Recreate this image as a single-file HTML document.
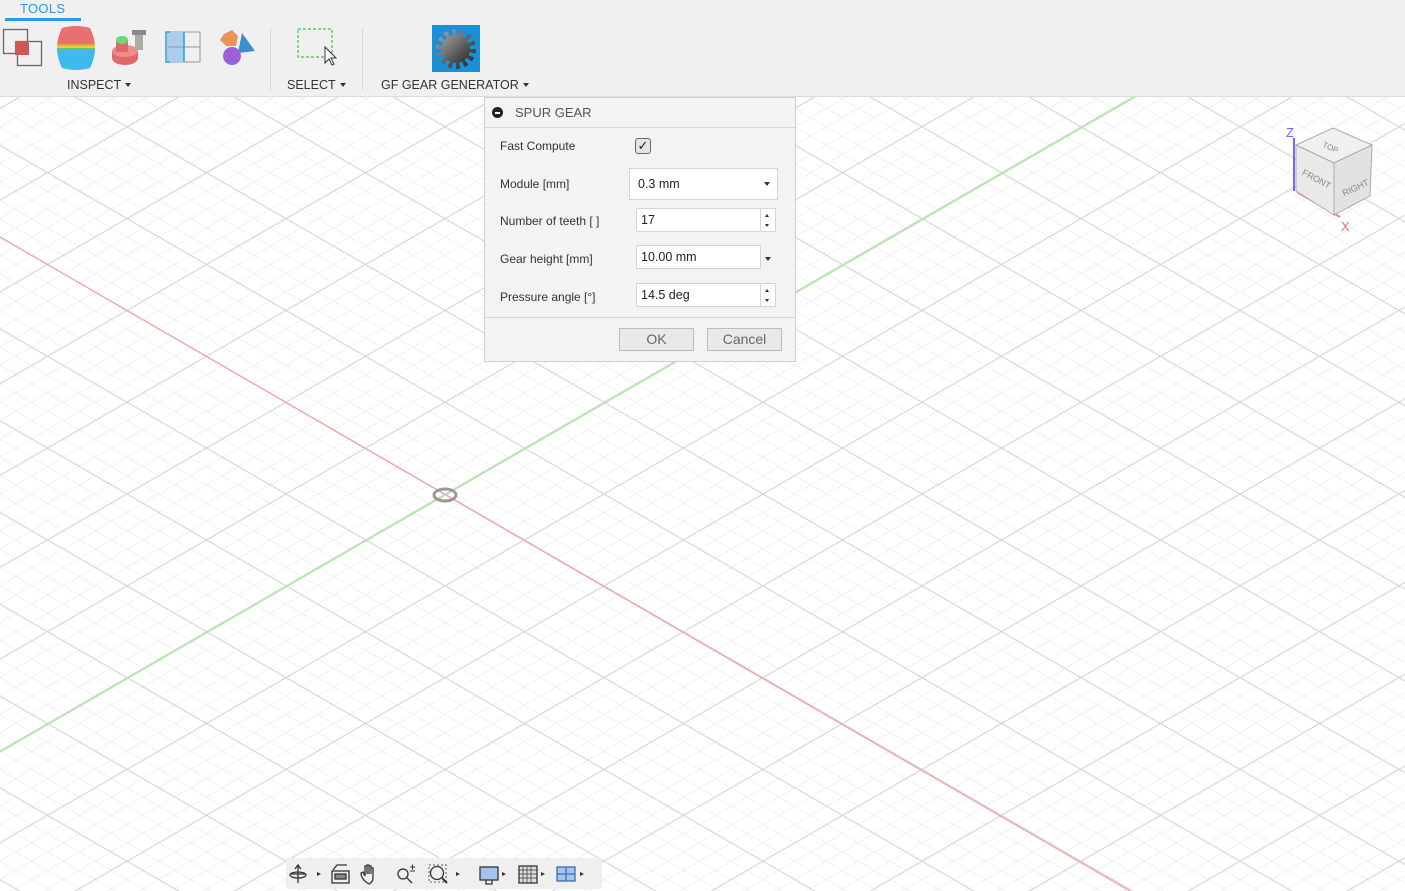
<!DOCTYPE html>
<html><head><meta charset="utf-8">
<style>
*{margin:0;padding:0;box-sizing:border-box}
body{width:1405px;height:891px;overflow:hidden;background:#fff;font-family:"Liberation Sans",Arial,sans-serif;position:relative}
#tb{position:absolute;left:0;top:0;width:1405px;height:97px;background:#f0f0f0;border-bottom:1px solid #dcdcdc}
.lbl{position:absolute;font-size:12.5px;color:#333;top:78px;white-space:nowrap}
.lbl:after{content:"";display:inline-block;margin-left:4px;vertical-align:2px;border-left:3px solid transparent;border-right:3px solid transparent;border-top:4px solid #333}
.sep{position:absolute;top:28px;width:1px;height:62px;background:#d8d8d8}
#dlg{position:absolute;left:484px;top:97px;width:312px;height:265px;background:#f3f3f3;border:1px solid #cfcfcf;font-size:12px;color:#333}
#dlg .hd{height:30px;border-bottom:1px solid #d6d6d6;position:relative}
#dlg .hd span{position:absolute;left:30px;top:7px;color:#555;font-size:13px}
#dlg .hd i{position:absolute;left:7px;top:9px;width:11px;height:11px;border-radius:50%;background:#222}
#dlg .hd i:after{content:"";position:absolute;left:3px;top:5px;width:5px;height:1.5px;background:#fff}
.row{position:absolute;left:15px}
.inp{position:absolute;background:#fff;border:1px solid #d4d4d4;font-size:12.5px;padding-left:4px;line-height:22px;height:24px;color:#222}
.spin{position:absolute;width:15px;height:24px;border:1px solid #d4d4d4;border-left:none;background:#fff}
.spin:before{content:"";position:absolute;left:4px;top:5px;border-left:2.5px solid transparent;border-right:2.5px solid transparent;border-bottom:3px solid #333}
.spin:after{content:"";position:absolute;left:4px;top:15px;border-left:2.5px solid transparent;border-right:2.5px solid transparent;border-top:3px solid #333}
.tri{position:absolute;border-left:3.5px solid transparent;border-right:3.5px solid transparent;border-top:4px solid #333}
.btn{position:absolute;top:230px;height:23px;border:1px solid #bdbdbd;background:#e9e9e9;font-size:14px;color:#666;text-align:center;line-height:21px}
#bt{position:absolute;left:286px;top:858px;width:316px;height:31px;background:#efefef}
</style></head><body>
<svg width="1405" height="891" style="position:absolute;left:0;top:0">
<defs>
<pattern id="g" patternUnits="userSpaceOnUse" x="-32" y="35" width="159" height="91.8">
<g stroke="#f0f0f0" stroke-width="1">
<line x1="-127.2" y1="0" x2="31.8" y2="91.8"/><line x1="-95.4" y1="0" x2="63.6" y2="91.8"/><line x1="-63.6" y1="0" x2="95.4" y2="91.8"/><line x1="-31.8" y1="0" x2="127.2" y2="91.8"/>
<line x1="31.8" y1="0" x2="190.8" y2="91.8"/><line x1="63.6" y1="0" x2="222.6" y2="91.8"/><line x1="95.4" y1="0" x2="254.4" y2="91.8"/><line x1="127.2" y1="0" x2="286.2" y2="91.8"/>
<line x1="31.8" y1="0" x2="-127.2" y2="91.8"/><line x1="63.6" y1="0" x2="-95.4" y2="91.8"/><line x1="95.4" y1="0" x2="-63.6" y2="91.8"/><line x1="127.2" y1="0" x2="-31.8" y2="91.8"/>
<line x1="190.8" y1="0" x2="31.8" y2="91.8"/><line x1="222.6" y1="0" x2="63.6" y2="91.8"/><line x1="254.4" y1="0" x2="95.4" y2="91.8"/><line x1="286.2" y1="0" x2="127.2" y2="91.8"/>
</g>
<g stroke="#d3d3d3" stroke-width="1.1">
<line x1="0" y1="0" x2="159" y2="91.8"/><line x1="-159" y1="0" x2="0" y2="91.8"/><line x1="159" y1="0" x2="318" y2="91.8"/>
<line x1="159" y1="0" x2="0" y2="91.8"/><line x1="0" y1="0" x2="-159" y2="91.8"/><line x1="318" y1="0" x2="159" y2="91.8"/>
</g>
</pattern>
<linearGradient id="gg" x1="0" y1="0" x2="1" y2="1"><stop offset="0" stop-color="#a0a0a0"/><stop offset="1" stop-color="#2a2a2a"/></linearGradient>
</defs>
<rect x="0" y="97" width="1405" height="794" fill="url(#g)"/>
<line x1="0" y1="237" x2="1130" y2="891" stroke="#f4a4a4" stroke-width="1.3"/>
<line x1="0" y1="752" x2="1135" y2="97" stroke="#a6ec9c" stroke-width="1.3"/>
<ellipse cx="445" cy="495" rx="11" ry="6" fill="none" stroke="#999" stroke-width="3"/>
<g>
<line x1="1294" y1="138" x2="1294" y2="191" stroke="#6a6aff" stroke-width="2"/>
<text x="1286" y="137" font-size="13" fill="#6a6aff" font-family="Liberation Sans">Z</text>
<line x1="1297" y1="192" x2="1340" y2="217" stroke="#f08080" stroke-width="2"/>
<text x="1341" y="231" font-size="13" fill="#f07070" font-family="Liberation Sans">X</text>
<polygon points="1296,145 1333,128 1372,145 1334,163" fill="#f0f0f0" stroke="#aaa"/>
<polygon points="1296,145 1334,163 1334,215 1296,191" fill="#e9e9e9" stroke="#aaa"/>
<polygon points="1334,163 1372,145 1370,196 1334,215" fill="#e2e2e2" stroke="#aaa"/>
<text x="1322" y="150" font-size="8" fill="#888" transform="rotate(25 1330 148)">TOP</text>
<text x="1300" y="180" font-size="9" fill="#888" transform="rotate(28 1312 180)">FRONT</text>
<text x="1340" y="192" font-size="9" fill="#888" transform="rotate(-25 1352 185)">RIGHT</text>
</g>
</svg>

<div id="tb">
<div style="position:absolute;left:20px;top:1px;font-size:13px;color:#2a9ce0;letter-spacing:.3px">TOOLS</div>
<div style="position:absolute;left:5px;top:18px;width:76px;height:3px;background:#2a9ce0"></div>
<svg width="540" height="76" style="position:absolute;left:0;top:20px">
<rect x="3.5" y="9.5" width="24" height="24" fill="none" stroke="#666" stroke-width="1.3"/>
<rect x="17.5" y="21.5" width="24" height="24" fill="none" stroke="#666" stroke-width="1.3"/>
<rect x="15" y="21" width="14" height="14" fill="#d05555"/>
<clipPath id="bc"><path d="M62,8 Q76,4 90,8 Q100,28 90,48 Q76,52 62,48 Q52,28 62,8Z"/></clipPath>
<g clip-path="url(#bc)"><rect x="50" y="4" width="52" height="20" fill="#e87070"/><rect x="50" y="24" width="52" height="2" fill="#f2a040"/><rect x="50" y="26" width="52" height="2" fill="#e8d040"/><rect x="50" y="28" width="52" height="2" fill="#60c860"/><rect x="50" y="30" width="52" height="20" fill="#40b8f0"/></g>
<ellipse cx="125" cy="38" rx="13" ry="7" fill="#e06868"/><rect x="112" y="31" width="26" height="7" fill="#e06868"/><ellipse cx="125" cy="31" rx="13" ry="6" fill="#ef8b8b"/>
<rect x="116" y="20" width="12" height="12" fill="#e06868"/><ellipse cx="122" cy="20" rx="6" ry="4" fill="#70d870"/>
<rect x="132" y="10" width="14" height="5" fill="#888"/><rect x="135" y="15" width="8" height="15" fill="#aaa"/>
<rect x="168" y="12" width="32" height="30" fill="none" stroke="#999"/><rect x="168" y="12" width="16" height="30" fill="#a8cdef"/><line x1="168" y1="27" x2="200" y2="27" stroke="#999"/><line x1="184" y1="12" x2="184" y2="42" stroke="#2a9ce0" stroke-width="1.5"/>
<path d="M170,12 h-4 v30 h4" fill="none" stroke="#2a9ce0" stroke-width="1.5"/>
<polygon points="224,14 232,10 238,16 236,26 226,26 220,20" fill="#e8955a"/>
<polygon points="242,13 255,31 238,33" fill="#3b8fd0"/>
<circle cx="232" cy="36" r="9" fill="#9d60d8"/>
<rect x="298" y="9" width="34" height="28" fill="none" stroke="#4cbb5a" stroke-dasharray="3,2" stroke-width="1.2"/>
<path d="M325,27 v16 l4,-4 l3,6 l2,-1 l-3,-6 l5,0 z" fill="#fff" stroke="#333" stroke-width="1"/>
<rect x="432" y="5" width="48" height="47" fill="#1a90d8"/>
<circle cx="456" cy="29" r="16.5" fill="none" stroke="url(#gg)" stroke-width="7" stroke-dasharray="3.7 3.7"/>
<circle cx="456" cy="29" r="14" fill="url(#gg)"/>
</svg>
<div class="sep" style="left:270px"></div><div class="sep" style="left:362px"></div>
<div class="lbl" style="left:67px">INSPECT</div>
<div class="lbl" style="left:287px">SELECT</div>
<div class="lbl" style="left:381px">GF GEAR GENERATOR</div>
</div>

<div id="dlg">
<div class="hd"><i></i><span>SPUR GEAR</span></div>
<div class="row" style="top:41px">Fast Compute</div>
<div style="position:absolute;left:150px;top:40px;width:16px;height:16px;border:1px solid #666;border-radius:3px;background:#e4e4e4;font-size:13px;line-height:14px;text-align:center;color:#222">✓</div>
<div class="row" style="top:79px">Module [mm]</div>
<div class="inp" style="left:144px;top:70px;width:149px;height:32px;line-height:30px;padding-left:8px">0.3 mm</div>
<div class="tri" style="left:279px;top:84px"></div>
<div class="row" style="top:116px">Number of teeth [ ]</div>
<div class="inp" style="left:151px;top:110px;width:125px">17</div><div class="spin" style="left:276px;top:110px"></div>
<div class="row" style="top:154px">Gear height [mm]</div>
<div class="inp" style="left:151px;top:147px;width:125px">10.00 mm</div>
<div class="tri" style="left:280px;top:159px"></div>
<div class="row" style="top:192px">Pressure angle [°]</div>
<div class="inp" style="left:151px;top:185px;width:125px">14.5 deg</div><div class="spin" style="left:276px;top:185px"></div>
<div style="position:absolute;left:0;top:219px;width:310px;height:1px;background:#d6d6d6"></div>
<div class="btn" style="left:134px;width:75px">OK</div>
<div class="btn" style="left:222px;width:75px">Cancel</div>
</div>

<div id="bt">
<svg width="316" height="31" style="position:absolute;left:0;top:0" fill="none" stroke="#333" stroke-width="1.3">
<path d="M12,7 v18 M5,16 h14 M9,11 l3,-4 l3,4"/><ellipse cx="12" cy="17" rx="8" ry="3"/>
<path d="M31,14 l4,2 l-4,2z" fill="#333" stroke="none"/>
<rect x="46" y="13" width="17" height="12"/><rect x="49" y="16" width="11" height="5" fill="#888"/><path d="M47,12 l4,-5 h10"/>
<path d="M80,24 q-5,-4 -5,-9 l2,-1 l2,4 v-10 h2 v8 v-9 h2 v9 v-8 h2 v8 v-6 h2 v10 q0,4 -4,6z"/>
<circle cx="117" cy="16" r="5"/><path d="M121,20 l5,5"/><path d="M124,9 h5 M126.5,6.5 v5 M124,13 h5" stroke-width="1"/>
<circle cx="151" cy="15" r="6.5"/><path d="M156,20 l5,5" stroke-width="2"/><rect x="143" y="7" width="17" height="17" stroke-dasharray="2,2" stroke-width="0.8"/>
<path d="M170,14 l4,2 l-4,2z" fill="#333" stroke="none"/>
<rect x="194" y="9" width="18" height="13" fill="#a4c4ee"/><path d="M200,22 v4 h6 v-4"/>
<path d="M216,14 l4,2 l-4,2z" fill="#333" stroke="none"/>
<rect x="233" y="8" width="18" height="17" fill="#ddd"/><path d="M237,8v17M241,8v17M245,8v17M233,12h18M233,16h18M233,20h18" stroke-width="0.7"/>
<path d="M255,14 l4,2 l-4,2z" fill="#333" stroke="none"/>
<rect x="271" y="9" width="18" height="14" fill="#a4c4ee" stroke="#3a6ea8"/><path d="M280,9v14M271,16h18" stroke="#3a6ea8"/>
<path d="M294,14 l4,2 l-4,2z" fill="#333" stroke="none"/>
</svg>
</div>
</body></html>
